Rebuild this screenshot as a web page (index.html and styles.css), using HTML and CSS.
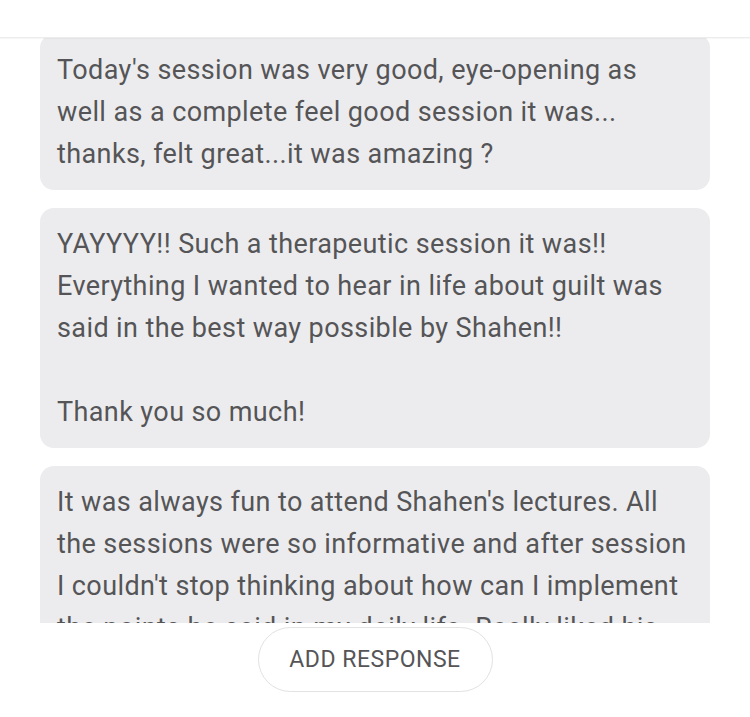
FILE: index.html
```html
<!DOCTYPE html>
<html lang="en">
<head>
<meta charset="utf-8">
<title>Responses</title>
<link rel="stylesheet" href="styles.css">
</head>
<body>
<div class="screen">
  <header class="topbar"></header>
  <main class="feed">
    <div class="list">
      <div class="card">Today's session was very good, eye-opening as well as a complete feel good session it was... thanks, felt great...it was amazing ?</div>
      <div class="card">YAYYYY!! Such a therapeutic session it was!! Everything I wanted to hear in life about guilt was said in the best way possible by Shahen!!<br><br>Thank you so much!</div>
      <div class="card">It was always fun to attend Shahen's lectures. All the sessions were so informative and after session I couldn't stop thinking about how can I implement the points he said in my daily life. Really liked his way of explaining things with examples.</div>
    </div>
  </main>
  <footer class="footer">
    <button class="add-btn">ADD RESPONSE</button>
  </footer>
</div>
</body>
</html>
```
FILE: styles.css
```css
* { box-sizing: border-box; }
html, body { margin: 0; padding: 0; background: #fff; }
body { font-family: Roboto, "Noto Sans", sans-serif; }
.screen {
  width: 750px;
  height: 717px;
  display: flex;
  flex-direction: column;
  overflow: hidden;
}
.topbar {
  height: 38px;
  flex: none;
  border-bottom: 1.5px solid #ececec;
  box-shadow: 0 1px 1px rgba(0,0,0,0.03);
  position: relative;
  z-index: 2;
  background: #fff;
}
.feed {
  height: 585px;
  flex: none;
  overflow: hidden;
}
.list {
  display: flex;
  flex-direction: column;
  gap: 18px;
  padding: 0 40px;
  margin-top: -4px;
}
.card {
  background: #ececee;
  border-radius: 14px;
  padding: 15px 20px 15px 17px;
  font-size: 27px;
  line-height: 42px;
  color: #555557;
  letter-spacing: 0.4px;
}
.footer {
  flex: 1;
  display: flex;
  justify-content: center;
  align-items: flex-start;
  padding-top: 4px;
}
.add-btn {
  width: 235px;
  height: 65px;
  border: 1.5px solid #e2e2e2;
  border-radius: 33px;
  background: #fff;
  font-family: Roboto, "Noto Sans", sans-serif;
  font-size: 23px;
  color: #555557;
  letter-spacing: 0.5px;
  cursor: pointer;
}
```
